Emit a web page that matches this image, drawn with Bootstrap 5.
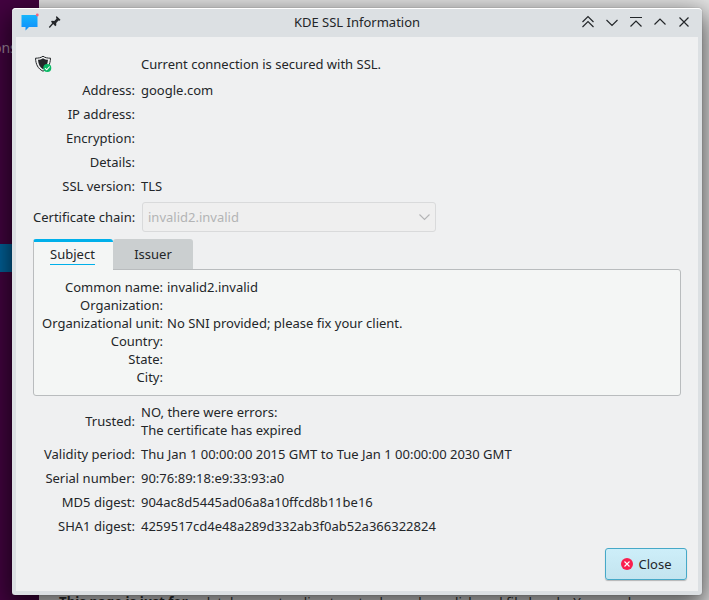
<!DOCTYPE html>
<html lang="en">
<head>
<meta charset="utf-8">
<meta name="viewport" content="width=device-width, initial-scale=1">
<title>KDE SSL Information</title>
<link href="https://cdn.jsdelivr.net/npm/bootstrap@5.3.0/dist/css/bootstrap.min.css" rel="stylesheet">
<style>
body{width:709px;height:600px;margin:0;background:#e4e4e4;font-family:"Noto Sans",sans-serif;font-size:13px;line-height:18px;color:#232629}
.desk-side{width:39px;background:#430340}
.side-text{left:-7px;top:38px;font-size:14px;line-height:20px;color:#a08a9f}
.side-sel{left:0;top:244px;width:39px;height:28px;background:#00639c}
.page-text{left:59px;top:593px;font-size:13.3px;line-height:18px;color:#333;white-space:pre}
.kwin{left:12px;top:8px;width:690px;height:587px;background:#dce0e3;border-radius:4px 4px 3px 3px;padding:0 4px 4px;box-shadow:inset 0 1px #fff,0 0 1px rgba(0,0,0,.5),0 9px 26px 4px rgba(0,0,0,.62)}
.kwin-title{height:29px}
.kwin-caption{top:5px}
.kwin-body{height:554px;background:#eff0f1;padding:14px 17px 0}
.info-row{display:grid;grid-template-columns:102px 1fr;column-gap:6px;min-height:24px;align-items:center}
.info-row>:first-child{text-align:right;white-space:nowrap}
.status-row{height:27px;padding-bottom:2px}
.combo{width:294px;height:30px;margin-left:1px;border:1px solid #d9dadb;border-radius:3px;background:#efefef;color:#b3b4b5;padding:0 5px}
.ktab{width:80px;height:30px;border-radius:3px 3px 0 0;background:#cbcfd0}
.ktab.active{height:31px;background:#f4f6f5;border:1px solid #bcbebf;border-width:0 0 0 1px;border-top:3px solid #00b0ea;z-index:1;padding:0 2px 2px 0}
.ktab.active span{border-bottom:1px solid #00b0ea;height:20px;margin-top:-1px}
.kpanel{width:648px;height:127px;margin-top:-1px;border:1px solid #b9bcbe;border-radius:0 3px 3px 3px;background:#f4f6f5;padding:8px 0 0 8px}
.kpanel .info-row{grid-template-columns:121px 1fr;column-gap:4px;min-height:18px}
.kclose{width:82px;height:32px;border:1px solid #46a9c8;border-radius:3px;background:linear-gradient(#cdeef9,#c3e4ef);color:#232629;font-size:13px;line-height:18px;box-shadow:0 1px 1px rgba(0,0,0,.25);margin-right:-6px}
.shield{margin-left:1px}
.pin{margin-left:8px;margin-bottom:2px}
.win-buttons{margin-right:8px;margin-bottom:2px}
</style>
<script src="https://cdn.jsdelivr.net/npm/bootstrap@5.3.0/dist/js/bootstrap.bundle.min.js"></script>
</head>
<body class="position-relative overflow-hidden">
<div class="desk-side h-100"></div>
<div class="side-text position-absolute">ons</div>
<div class="side-sel position-absolute"></div>
<div class="page-text position-absolute"><b>This page is just for</b> a database entry directory to do work on click and file heads. You need</div>
<main class="kwin position-absolute">
<header class="kwin-title d-flex align-items-center position-relative">
<svg class="ms-1" width="20" height="20" viewBox="0 0 20 20"><defs><linearGradient id="blue" x2="0" y2="1"><stop stop-color="#16b5fc"/><stop offset="1" stop-color="#118cfb"/></linearGradient></defs><path d="M1.500 2h16v12H9l-3.500 3.500v-3.500h-4z" fill="url(#blue)"/><circle cx="17.300" cy="2" r="1.400" fill="#f0647c"/></svg>
<svg class="pin" width="14" height="14" viewBox="0 0 14 14" fill="#232629"><path d="M8.500 1l4 3.800-.8 1-1.200-.2-2.300 2.300.1 2.400-1 .9L3 6.800l.8-1 2.500.1 2.200-2.200-.5-1.400z"/><path d="M5.200 8L1.300 12.500" stroke="#232629" stroke-width="1.200"/></svg>
<div class="kwin-caption position-absolute start-0 end-0 text-center">KDE SSL Information</div>
<svg class="ms-auto win-buttons" width="108" height="14" viewBox="0 0 108 14" fill="none" stroke="#232629" stroke-width="1.150"><path d="M.5 7L6 1.500 11.500 7M.5 12L6 6.500l5.500 5.500M24.500 5L30 10.500l5.500-5.500M48 2.500h12M48.500 11.500L54 6l5.500 5.500M72.500 9.500L78 4l5.500 5.500M97.500 2.500l9 9M106.500 2.500l-9 9"/></svg>
</header>
<section class="kwin-body">
<div class="info-row status-row"><svg class="shield" width="18" height="18" viewBox="0 0 18 18"><path d="M9 1.200C7 2.800 4 3.200 1.500 3.200c.3 6 2.300 10.500 7.500 13 5.200-2.500 7.200-7 7.500-13C14 3.200 11 2.800 9 1.200z" fill="#eff0f1" stroke="#232629" stroke-width="1"/><path d="M9 3.200c-1.500 1-3.300 1.500-5 1.600.3 4.500 1.800 7.600 5 9.500 3.200-1.900 4.700-5 5-9.500-1.700-.1-3.500-.6-5-1.600z" fill="#232629"/><circle cx="13.300" cy="13" r="4" fill="#0bb966"/><path d="M11 13.200l1.700 1.600 3-3.300" fill="none" stroke="#fff" stroke-width="1.100"/></svg><div>Current connection is secured with SSL.</div></div>
<div class="info-row"><div>Address:</div><div>google.com</div></div>
<div class="info-row"><div>IP address:</div><div></div></div>
<div class="info-row"><div>Encryption:</div><div></div></div>
<div class="info-row"><div>Details:</div><div></div></div>
<div class="info-row"><div>SSL version:</div><div>TLS</div></div>
<div class="info-row pt-1"><div>Certificate chain:</div><div class="combo d-flex align-items-center justify-content-between"><span>invalid2.invalid</span><svg width="11" height="8" viewBox="0 0 11 8" fill="none" stroke="#b3b4b5" stroke-width="1.100"><path d="M.5 1.500l5 5 5-5"/></svg></div></div>
<div class="d-flex" style="padding-top:7px"><div class="ktab active d-flex justify-content-center align-items-center position-relative"><span>Subject</span></div><div class="ktab d-flex justify-content-center align-items-center">Issuer</div></div>
<div class="kpanel">
<div class="info-row"><div>Common name:</div><div>invalid2.invalid</div></div>
<div class="info-row"><div>Organization:</div><div></div></div>
<div class="info-row"><div>Organizational unit:</div><div>No SNI provided; please fix your client.</div></div>
<div class="info-row"><div>Country:</div><div></div></div>
<div class="info-row"><div>State:</div><div></div></div>
<div class="info-row"><div>City:</div><div></div></div>
</div>
<div class="info-row" style="padding:7px 0 3px"><div>Trusted:</div><div>NO, there were errors:<br>The certificate has expired</div></div>
<div class="info-row"><div>Validity period:</div><div>Thu Jan 1 00:00:00 2015 GMT to Tue Jan 1 00:00:00 2030 GMT</div></div>
<div class="info-row"><div>Serial number:</div><div>90:76:89:18:e9:33:93:a0</div></div>
<div class="info-row"><div>MD5 digest:</div><div>904ac8d5445ad06a8a10ffcd8b11be16</div></div>
<div class="info-row"><div>SHA1 digest:</div><div>4259517cd4e48a289d332ab3f0ab52a366322824</div></div>
<div class="d-flex justify-content-end" style="padding-top:10px"><button type="button" class="btn kclose p-0 d-flex align-items-center justify-content-center"><svg style="margin-right:6px" width="12" height="12" viewBox="0 0 12 12"><circle cx="6" cy="6" r="6" fill="#fa1f4e"/><path d="M3.500 3.500l5 5M8.500 3.500l-5 5" stroke="#fff" stroke-width="1.100"/></svg>Close</button></div>
</section>
</main>
</body>
</html>
